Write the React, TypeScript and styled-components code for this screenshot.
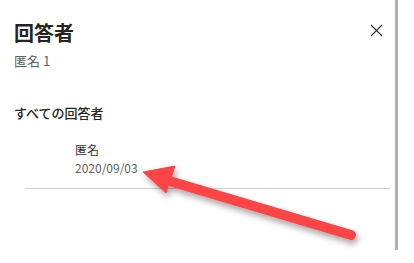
import React from "react";
import styled, { createGlobalStyle } from "styled-components";

const GlobalStyle = createGlobalStyle`
  html, body {
    margin: 0;
    padding: 0;
    background: #fff;
  }
  body {
    font-family: "Noto Sans CJK JP", "Noto Sans", "Liberation Sans", sans-serif;
    color: #323130;
  }
`;

const Page = styled.div`
  position: relative;
  width: 414px;
  height: 263px;
  overflow: hidden;
  background: #fff;
`;

const Panel = styled.div`
  width: 398px;
  height: 250px;
  box-sizing: border-box;
  border-right: 3px solid #b3afad;
  display: flex;
  flex-direction: column;
`;

const Header = styled.div`
  display: flex;
  justify-content: space-between;
  align-items: flex-start;
  padding: 19px 12px 0 14px;
`;

const Title = styled.h1`
  margin: 0;
  font-size: 20px;
  line-height: 28px;
  font-weight: 600;
  color: #252423;
`;

const CloseButton = styled.button`
  border: none;
  background: transparent;
  padding: 0;
  margin-top: 4px;
  width: 14px;
  height: 14px;
  display: flex;
  align-items: center;
  justify-content: center;
  cursor: pointer;
`;

const Subtitle = styled.div`
  padding: 5px 14px 0;
  font-size: 13px;
  line-height: 18px;
  color: #605e5c;
`;

const Section = styled.div`
  padding: 34px 14px 0;
  font-size: 13px;
  line-height: 18px;
  font-weight: 500;
  color: #252423;
`;

const Respondent = styled.div`
  margin: 18px 5px 0 25px;
  padding: 0 0 11px 50px;
  border-bottom: 1px solid #d2d0ce;
  display: flex;
  flex-direction: column;
`;

const Name = styled.span`
  font-size: 12px;
  line-height: 19px;
  color: #323130;
`;

const DateText = styled.span`
  font-size: 12px;
  line-height: 18px;
  color: #605e5c;
`;

const ArrowLayer = styled.svg`
  position: absolute;
  left: 0;
  top: 0;
  pointer-events: none;
`;

const CloseIcon = () => (
  <svg width="13" height="13" viewBox="0 0 13 13">
    <path d="M1 1 L12 12 M12 1 L1 12" stroke="#323130" strokeWidth="1.1" fill="none" />
  </svg>
);

const Arrow = () => (
  <ArrowLayer width="414" height="263" viewBox="0 0 414 263">
    <defs>
      <filter id="shadow" x="-20%" y="-40%" width="140%" height="180%">
        <feDropShadow dx="2" dy="4" stdDeviation="3" floodColor="#000" floodOpacity="0.35" />
      </filter>
    </defs>
    <g filter="url(#shadow)" fill="#fe4545" stroke="#fe4545">
      <line x1="166" y1="180" x2="351" y2="235" strokeWidth="10" strokeLinecap="round" />
      <polygon points="143,172 175,166 166,193" strokeWidth="1" strokeLinejoin="round" />
    </g>
  </ArrowLayer>
);

export default function App() {
  return (
    <Page>
      <GlobalStyle />
      <Panel>
        <Header>
          <Title>回答者</Title>
          <CloseButton aria-label="閉じる">
            <CloseIcon />
          </CloseButton>
        </Header>
        <Subtitle>匿名 1</Subtitle>
        <Section>すべての回答者</Section>
        <Respondent>
          <Name>匿名</Name>
          <DateText>2020/09/03</DateText>
        </Respondent>
      </Panel>
      <Arrow />
    </Page>
  );
}
